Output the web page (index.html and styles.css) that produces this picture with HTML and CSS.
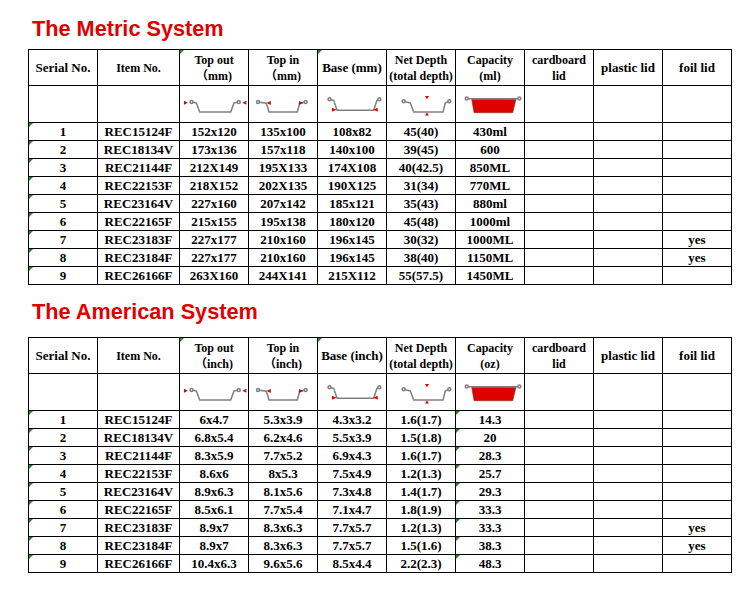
FILE: index.html
```html
<!DOCTYPE html>
<html>
<head>
<meta charset="utf-8">
<title>Tray sizes</title>
<link rel="stylesheet" href="styles.css">
</head>
<body>
<svg class="defs" width="0" height="0" aria-hidden="true">
  <symbol id="i-topout" viewBox="0 0 68 36">
    <g fill="none" stroke="#808080" stroke-width="1.5">
      <circle cx="11.5" cy="16" r="1.5"/>
      <circle cx="58.8" cy="16" r="1.5"/>
      <path d="M13 16.3 L16.3 17 L19.7 26 L50.7 26 L54 17 L57.3 16.3"/>
    </g>
    <g fill="#e00000">
      <path d="M4 14.7 L4 18.7 L7.8 16.7Z"/>
      <path d="M66.3 14.7 L66.3 18.7 L62.5 16.7Z"/>
    </g>
  </symbol>
  <symbol id="i-topin" viewBox="0 0 68 36">
    <g fill="none" stroke="#808080" stroke-width="1.5">
      <circle cx="9" cy="16" r="1.5"/>
      <circle cx="56.7" cy="16" r="1.5"/>
      <path d="M10.5 16.3 L17.3 17.2 L20 26 L48.3 26 L50.7 17.2 L55.2 16.3"/>
    </g>
    <g fill="#e00000">
      <path d="M17.6 17 L21.8 15 L21.8 19Z"/>
      <path d="M54.2 17 L50 15 L50 19Z"/>
    </g>
  </symbol>
  <symbol id="i-base" viewBox="0 0 68 36">
    <g fill="none" stroke="#808080" stroke-width="1.5">
      <circle cx="11.5" cy="13.3" r="1.5"/>
      <circle cx="61.3" cy="13.3" r="1.5"/>
      <path d="M13 13.8 L15.7 14.3 L19 24.3 L55.7 24.3 L59 14.3 L59.8 13.8"/>
    </g>
    <g fill="#e00000">
      <path d="M14 21.7 L14 25.7 L18.4 23.7Z"/>
      <path d="M59.7 21.7 L59.7 25.7 L55.3 23.7Z"/>
    </g>
  </symbol>
  <symbol id="i-depth" viewBox="0 0 68 36">
    <g fill="none" stroke="#808080" stroke-width="1.5">
      <circle cx="16.7" cy="15.3" r="1.5"/>
      <circle cx="62.3" cy="15.3" r="1.5"/>
      <path d="M18.2 15.8 L23.3 17 L26.7 26 L56 26 L58.3 17 L60.8 15.8"/>
    </g>
    <g fill="#e00000">
      <path d="M38 10 L42 10 L40 13.2Z"/>
      <path d="M40 26.4 L38 29.6 L42 29.6Z"/>
    </g>
  </symbol>
  <symbol id="i-cap" viewBox="0 0 68 36">
    <path d="M15.7 13.3 L60 13.3 L56.7 26.7 L18 26.7Z" fill="#e00000" stroke="#7d3c1e" stroke-width="0.6"/>
    <g fill="none" stroke="#808080" stroke-width="1.5">
      <circle cx="10.7" cy="12.5" r="1.5"/>
      <circle cx="63.3" cy="12.5" r="1.5"/>
      <path d="M12.2 12.8 L61.8 12.8"/>
    </g>
  </symbol>
</svg>

<div class="page">
  <h1 class="title title-metric">The Metric System</h1>
  <table class="grid">
    <colgroup>
      <col class="c-std"><col class="c-item"><col class="c-std"><col class="c-std"><col class="c-std">
      <col class="c-std"><col class="c-std"><col class="c-std"><col class="c-std"><col class="c-std">
    </colgroup>
    <tr class="r-head">
      <th>Serial No.</th>
      <th class="s12">Item No.</th>
      <th class="s12 tri">Top out<br>（mm)</th>
      <th class="s12">Top in<br>（mm)</th>
      <th class="tri">Base (mm)</th>
      <th class="s12">Net Depth<br>(total depth)</th>
      <th class="s12">Capacity<br>(ml)</th>
      <th class="s12">cardboard<br>lid</th>
      <th>plastic lid</th>
      <th>foil lid</th>
    </tr>
    <tr class="r-icon">
      <td></td><td></td>
      <td><svg class="ico"><use href="#i-topout"/></svg></td>
      <td><svg class="ico"><use href="#i-topin"/></svg></td>
      <td><svg class="ico"><use href="#i-base"/></svg></td>
      <td><svg class="ico"><use href="#i-depth"/></svg></td>
      <td><svg class="ico"><use href="#i-cap"/></svg></td>
      <td></td><td></td><td></td>
    </tr>
    <tr class="r-data"><td class="tri">1</td><td>REC15124F</td><td>152x120</td><td>135x100</td><td>108x82</td><td>45(40)</td><td>430ml</td><td></td><td></td><td></td></tr>
    <tr class="r-data"><td class="tri">2</td><td>REC18134V</td><td>173x136</td><td>157x118</td><td>140x100</td><td>39(45)</td><td>600</td><td></td><td></td><td></td></tr>
    <tr class="r-data"><td class="tri">3</td><td>REC21144F</td><td>212X149</td><td>195X133</td><td>174X108</td><td>40(42.5)</td><td>850ML</td><td></td><td></td><td></td></tr>
    <tr class="r-data"><td class="tri">4</td><td>REC22153F</td><td>218X152</td><td>202X135</td><td>190X125</td><td>31(34)</td><td>770ML</td><td></td><td></td><td></td></tr>
    <tr class="r-data"><td class="tri">5</td><td>REC23164V</td><td>227x160</td><td>207x142</td><td>185x121</td><td>35(43)</td><td>880ml</td><td></td><td></td><td></td></tr>
    <tr class="r-data"><td class="tri">6</td><td>REC22165F</td><td>215x155</td><td>195x138</td><td>180x120</td><td>45(48)</td><td>1000ml</td><td></td><td></td><td></td></tr>
    <tr class="r-data"><td class="tri">7</td><td>REC23183F</td><td>227x177</td><td>210x160</td><td>196x145</td><td>30(32)</td><td>1000ML</td><td></td><td></td><td>yes</td></tr>
    <tr class="r-data"><td class="tri">8</td><td>REC23184F</td><td>227x177</td><td>210x160</td><td>196x145</td><td>38(40)</td><td>1150ML</td><td></td><td></td><td>yes</td></tr>
    <tr class="r-data"><td class="tri">9</td><td>REC26166F</td><td>263X160</td><td>244X141</td><td>215X112</td><td>55(57.5)</td><td>1450ML</td><td></td><td></td><td></td></tr>
  </table>

  <h1 class="title title-american">The American System</h1>
  <table class="grid">
    <colgroup>
      <col class="c-std"><col class="c-item"><col class="c-std"><col class="c-std"><col class="c-std">
      <col class="c-std"><col class="c-std"><col class="c-std"><col class="c-std"><col class="c-std">
    </colgroup>
    <tr class="r-head">
      <th>Serial No.</th>
      <th class="s12">Item No.</th>
      <th class="s12 tri">Top out<br>（inch)</th>
      <th class="s12">Top in<br>（inch)</th>
      <th class="tri">Base (inch)</th>
      <th class="s12">Net Depth<br>(total depth)</th>
      <th class="s12">Capacity<br>(oz)</th>
      <th class="s12">cardboard<br>lid</th>
      <th>plastic lid</th>
      <th>foil lid</th>
    </tr>
    <tr class="r-icon">
      <td></td><td></td>
      <td><svg class="ico"><use href="#i-topout"/></svg></td>
      <td><svg class="ico"><use href="#i-topin"/></svg></td>
      <td><svg class="ico"><use href="#i-base"/></svg></td>
      <td><svg class="ico"><use href="#i-depth"/></svg></td>
      <td><svg class="ico"><use href="#i-cap"/></svg></td>
      <td></td><td></td><td></td>
    </tr>
    <tr class="r-data"><td class="tri">1</td><td>REC15124F</td><td>6x4.7</td><td>5.3x3.9</td><td>4.3x3.2</td><td>1.6(1.7)</td><td class="tri">14.3</td><td></td><td></td><td></td></tr>
    <tr class="r-data"><td class="tri">2</td><td>REC18134V</td><td>6.8x5.4</td><td>6.2x4.6</td><td>5.5x3.9</td><td>1.5(1.8)</td><td class="tri">20</td><td></td><td></td><td></td></tr>
    <tr class="r-data"><td class="tri">3</td><td>REC21144F</td><td>8.3x5.9</td><td>7.7x5.2</td><td>6.9x4.3</td><td>1.6(1.7)</td><td class="tri">28.3</td><td></td><td></td><td></td></tr>
    <tr class="r-data"><td class="tri">4</td><td>REC22153F</td><td>8.6x6</td><td>8x5.3</td><td>7.5x4.9</td><td>1.2(1.3)</td><td class="tri">25.7</td><td></td><td></td><td></td></tr>
    <tr class="r-data"><td class="tri">5</td><td>REC23164V</td><td>8.9x6.3</td><td>8.1x5.6</td><td>7.3x4.8</td><td>1.4(1.7)</td><td class="tri">29.3</td><td></td><td></td><td></td></tr>
    <tr class="r-data"><td class="tri">6</td><td>REC22165F</td><td>8.5x6.1</td><td>7.7x5.4</td><td>7.1x4.7</td><td>1.8(1.9)</td><td class="tri">33.3</td><td></td><td></td><td></td></tr>
    <tr class="r-data"><td class="tri">7</td><td>REC23183F</td><td>8.9x7</td><td>8.3x6.3</td><td>7.7x5.7</td><td>1.2(1.3)</td><td class="tri">33.3</td><td></td><td></td><td>yes</td></tr>
    <tr class="r-data"><td class="tri">8</td><td>REC23184F</td><td>8.9x7</td><td>8.3x6.3</td><td>7.7x5.7</td><td>1.5(1.6)</td><td class="tri">38.3</td><td></td><td></td><td>yes</td></tr>
    <tr class="r-data"><td class="tri">9</td><td>REC26166F</td><td>10.4x6.3</td><td>9.6x5.6</td><td>8.5x4.4</td><td>2.2(2.3)</td><td class="tri">48.3</td><td></td><td></td><td></td></tr>
  </table>
</div>
</body>
</html>
```

FILE: styles.css
```css
html, body {
  margin: 0;
  padding: 0;
  background: #ffffff;
}

body {
  font-family: "Liberation Serif", "Noto Sans CJK SC", serif;
  color: #000000;
}

.defs {
  display: block;
  width: 0;
  height: 0;
  overflow: hidden;
}

.page {
  padding: 16px 0 0 28px;
}

.title {
  margin: 0;
  padding-left: 4px;
  height: 26px;
  font-family: "Liberation Sans", Arial, sans-serif;
  font-weight: bold;
  font-size: 21.7px;
  line-height: 26px;
  color: #e00000;
}

.title-metric {
  margin-bottom: 7px;
}

.title-american {
  margin-top: 14px;
  margin-bottom: 12px;
}

.grid {
  border-collapse: collapse;
  table-layout: fixed;
}

.c-std {
  width: 69px;
}

.c-item {
  width: 82px;
}

.grid th,
.grid td {
  border: 1px solid #000000;
  padding: 0;
  text-align: center;
  vertical-align: middle;
  font-weight: bold;
  font-size: 13px;
  line-height: 16px;
  white-space: nowrap;
  position: relative;
}

.grid th.s12 {
  font-size: 12px;
}

.r-head {
  height: 36px;
}

.r-icon {
  height: 37px;
}

.r-data {
  height: 18px;
}

.ico {
  display: block;
  width: 68px;
  height: 36px;
  margin: 0 auto;
}

.tri::before {
  content: "";
  position: absolute;
  left: 0;
  top: 0;
  width: 0;
  height: 0;
  border-top: 4px solid #1e8a1e;
  border-right: 4px solid transparent;
}
```
